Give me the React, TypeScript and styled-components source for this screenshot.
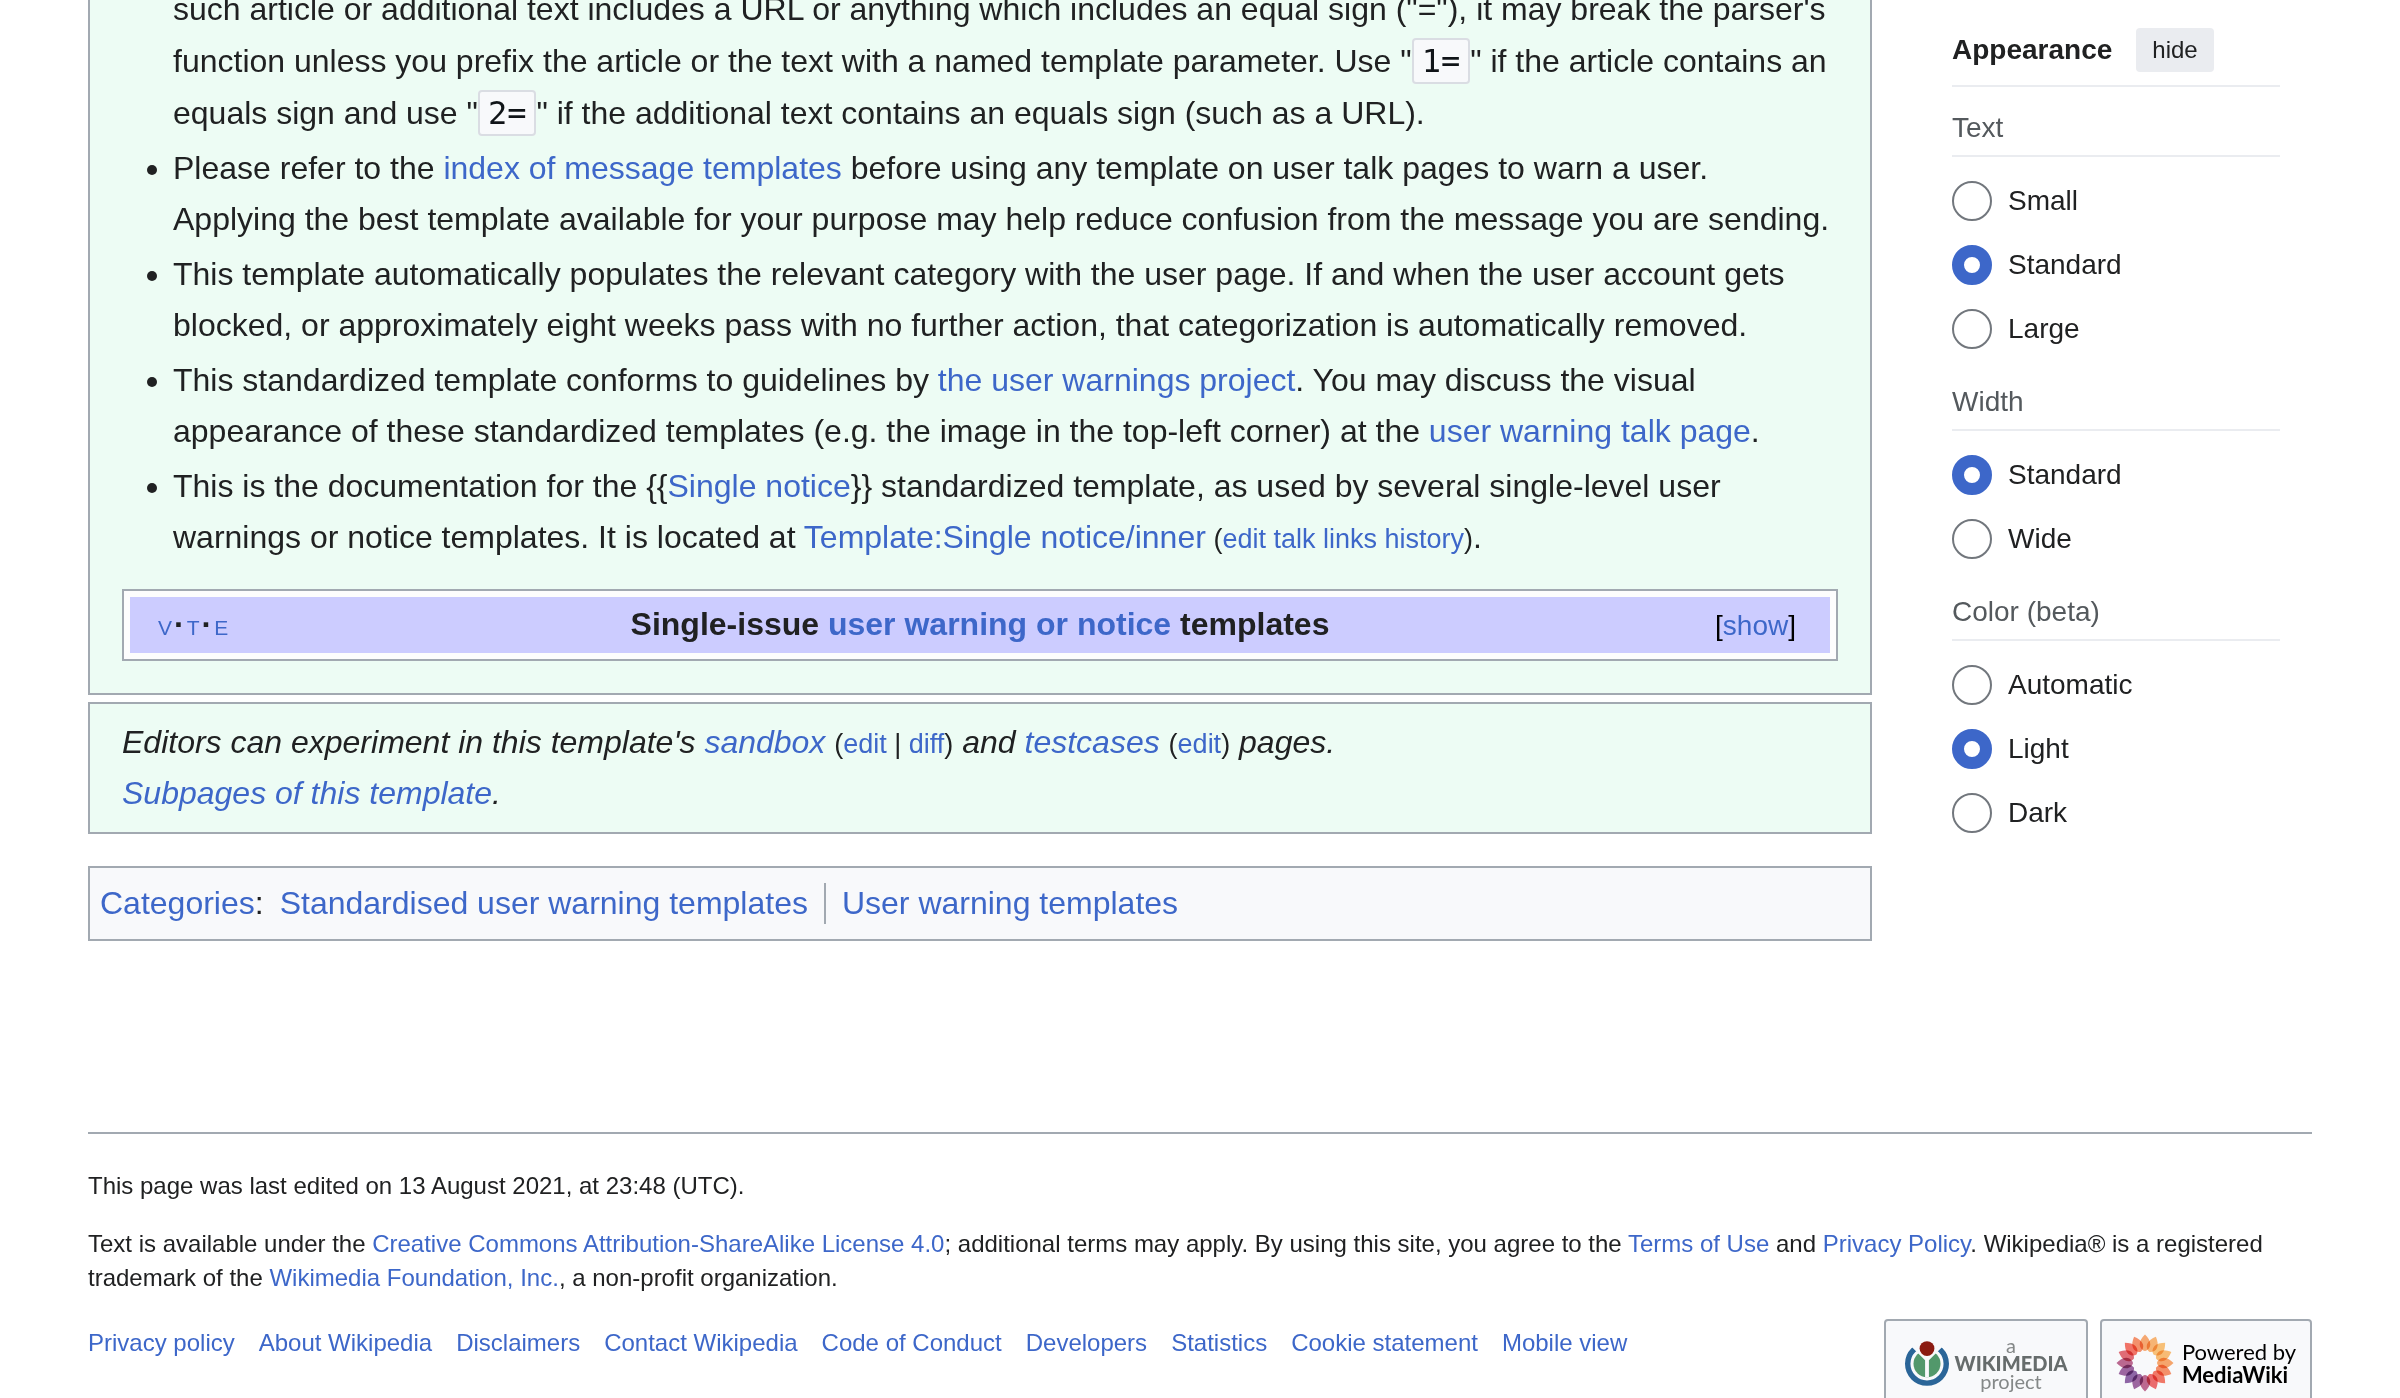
import React from "react";
import styled, { createGlobalStyle, css } from "styled-components";

const colors = {
  text: "#202122",
  subtle: "#54595d",
  link: "#3d67c9",
  border: "#a2a9b1",
  rule: "#eaecf0",
  panel: "#f8f9fb",
  mint: "#edfcf4",
};

const GlobalStyle = createGlobalStyle`
  *, *::before, *::after { box-sizing: border-box; }
  html { background: #fff; scrollbar-width: none; }
  body {
    margin: 0;
    color: ${colors.text};
    font-family: "Liberation Sans", Arial, sans-serif;
    font-size: 32px;
    line-height: 51px;
  }
`;

const Page = styled.div`
  height: 100vh;
  padding: 0 88px;
  overflow: hidden;
`;

const Columns = styled.div`
  display: grid;
  grid-template-columns: minmax(0, 1fr) 360px;
  column-gap: 80px;
`;

const Link = styled.a`
  color: ${colors.link};
  text-decoration: none;
  &:hover { text-decoration: underline; }
`;

const Article = styled.main`
  margin-top: -16px;
`;

const boxed = css`
  border: 2px solid ${colors.border};
`;

const DocBox = styled.section`
  ${boxed}
  border-top: 0;
  background: ${colors.mint};
  padding: 0 32px 32px;
`;

const Notes = styled.ul`
  margin: 0 8px 26px 51px;
  padding: 0;
`;

const Note = styled.li<{ $continued?: boolean }>`
  margin-bottom: 4px;
  list-style: ${(p) => (p.$continued ? "none" : "disc")};
`;

const Code = styled.code`
  border: 2px solid #dadde3;
  border-radius: 4px;
  background: ${colors.panel};
  color: #101418;
  padding: 2px 8px;
  font-family: "DejaVu Sans Mono", monospace;
  font-size: 32px;
  line-height: 52px;
`;

const Small = styled.span`
  font-size: 27px;
  font-style: normal;
  line-height: 40px;
`;

const Navbox = styled.nav`
  ${boxed}
  background: #fdfdfd;
  padding: 6px;
`;

const NavboxTitle = styled.div`
  display: grid;
  grid-template-columns: 192px 1fr 192px;
  align-items: baseline;
  background: #ccccff;
  padding: 2px 28px 3px;
`;

const ViewLinks = styled.span`
  font-size: 21px;
  line-height: 40px;
  white-space: nowrap;
`;

const Dot = styled.b`
  padding: 0 2px;
  font-size: 32px;
`;

const TitleText = styled.strong`
  text-align: center;
`;

const ToggleWrap = styled.span`
  padding-right: 6px;
  color: #000;
  font-size: 28px;
  line-height: 40px;
  text-align: right;
`;

const Toggle = styled.button`
  border: 0;
  background: none;
  padding: 0;
  color: ${colors.link};
  font: inherit;
  cursor: pointer;
`;

const SubpagesBox = styled.section`
  ${boxed}
  margin-top: 7px;
  background: ${colors.mint};
  padding: 13px 32px;
  font-style: italic;
`;

const Categories = styled.nav`
  ${boxed}
  display: flex;
  align-items: center;
  margin-top: 32px;
  background: ${colors.panel};
  padding: 10px;
`;

const CategoryList = styled.ul`
  display: flex;
  align-items: center;
  margin: 0;
  padding: 0;
  list-style: none;
`;

const Category = styled.li`
  padding: 0 16px;
  line-height: 41px;
  & + & { border-left: 2px solid ${colors.border}; }
`;

const Sidebar = styled.aside`
  padding: 28px 32px 0 0;
  font-size: 28px;
  line-height: 38px;
`;

const SidebarHeader = styled.div`
  display: flex;
  align-items: center;
  gap: 24px;
  border-bottom: 2px solid ${colors.rule};
  padding-bottom: 13px;
`;

const SidebarTitle = styled.strong`
  color: ${colors.text};
`;

const HideButton = styled.button`
  height: 44px;
  border: 0;
  border-radius: 4px;
  background: ${colors.rule};
  padding: 0 16px;
  color: ${colors.text};
  font-family: inherit;
  font-size: 24px;
  cursor: pointer;
`;

const OptionGroup = styled.fieldset`
  min-width: 0;
  margin: 0;
  border: 0;
  padding: 22px 0 12px;
`;

const GroupName = styled.legend`
  float: left;
  width: 100%;
  margin-bottom: 24px;
  border-bottom: 2px solid ${colors.rule};
  padding: 0 0 8px;
  color: ${colors.subtle};
`;

const Options = styled.div`
  clear: both;
  display: grid;
  gap: 24px;
`;

const Option = styled.label`
  display: flex;
  align-items: center;
  gap: 16px;
  height: 40px;
  cursor: pointer;
`;

const Radio = styled.input`
  appearance: none;
  width: 40px;
  height: 40px;
  margin: 0;
  border: 2px solid #72777d;
  border-radius: 50%;
  background: #fff;
  cursor: pointer;
  &:checked { border: 12px solid ${colors.link}; }
`;

const Footer = styled.footer`
  margin-top: 191px;
  border-top: 2px solid ${colors.border};
  padding: 35px 0 24px;
  font-size: 24px;
  line-height: 34px;
`;

const FooterText = styled.p`
  margin: 0 0 24px;
`;

const FooterRow = styled.div`
  display: flex;
  align-items: flex-start;
  justify-content: space-between;
`;

const FooterLinks = styled.ul`
  display: flex;
  flex-wrap: wrap;
  column-gap: 24px;
  margin: 0;
  padding: 7px 0 0;
  list-style: none;
`;

const Badges = styled.div`
  display: flex;
  gap: 12px;
`;

const Badge = styled.a<{ $width: number; $gap: number }>`
  ${boxed}
  display: flex;
  align-items: center;
  justify-content: center;
  gap: ${(p) => p.$gap}px;
  width: ${(p) => p.$width}px;
  height: 88px;
  border-radius: 4px;
  background: ${colors.panel};
  color: #000;
  font-family: Lato, sans-serif;
  text-decoration: none;
`;

const WikimediaText = styled.span`
  display: grid;
  justify-items: center;
  color: #848888;
  font-size: 20px;
  line-height: 18px;
`;

const WikimediaName = styled.b`
  color: #666c6c;
  font-size: 20px;
  font-weight: 900;
`;

const PoweredText = styled.span`
  display: grid;
  font-size: 22px;
  line-height: 23px;
`;

const PoweredName = styled.b`
  font-weight: 700;
`;

const WikimediaLogo = () => (
  <svg width="44" height="45" viewBox="-548 -564 1096 1112" aria-hidden="true">
    <clipPath id="wm-cut">
      <path d="M47.5-87.5v425h-95v-425l-552-552v1250h1199v-1250z" />
    </clipPath>
    <g clipPath="url(#wm-cut)">
      <circle r="336.5" fill="#52986b" />
      <circle r="480.25" fill="none" stroke="#2a6598" strokeWidth="135.5" />
    </g>
    <circle cy="-379.5" r="184.5" fill="#8b1b11" />
  </svg>
);

const petals = [
  "#f5a872", "#f6b474", "#f7c078", "#f7bb74", "#f5a56c", "#f3906a", "#f07868", "#ea6c6e",
  "#bc6890", "#9c66a0", "#8e66a6", "#9c66a0", "#ba6890", "#e06c76", "#f07468", "#f3906c",
];

const Petals = styled.g`
  isolation: isolate;
  path { mix-blend-mode: multiply; }
`;

const Sunflower = () => (
  <svg width="58" height="58" viewBox="-29 -29 58 58" aria-hidden="true">
    <Petals>
      {petals.map((fill, i) => (
        <path
          key={i}
          d="M0-28.500C3-25.500 5.500-22 5.300-18.500C5.200-15.500 2.800-12.500 0-12C-2.800-12.500-5.200-15.500-5.300-18.500C-5.500-22-3-25.500 0-28.500Z"
          fill={fill}
          transform={`rotate(${i * 22.5})`}
        />
      ))}
    </Petals>
  </svg>
);

const groups = [
  { name: "Text", options: ["Small", "Standard", "Large"], selected: "Standard" },
  { name: "Width", options: ["Standard", "Wide"], selected: "Standard" },
  { name: "Color (beta)", options: ["Automatic", "Light", "Dark"], selected: "Light" },
];

const footerLinks = [
  "Privacy policy", "About Wikipedia", "Disclaimers", "Contact Wikipedia", "Code of Conduct",
  "Developers", "Statistics", "Cookie statement", "Mobile view",
];

export default function App() {
  return (
    <Page>
      <GlobalStyle />
      <Columns>
        <Article>
          <DocBox>
            <Notes>
              <Note $continued>
                such article or additional text includes a URL or anything which includes an equal sign ("="), it may
                break the parser's function unless you prefix the article or the text with a named template parameter.
                Use "<Code>1=</Code>" if the article contains an equals sign and use "<Code>2=</Code>" if the
                additional text contains an equals sign (such as a URL).
              </Note>
              <Note>
                Please refer to the <Link href="#">index of message templates</Link> before using any template on user
                talk pages to warn a user. Applying the best template available for your purpose may help reduce
                confusion from the message you are sending.
              </Note>
              <Note>
                This template automatically populates the relevant category with the user page. If and when the user
                account gets blocked, or approximately eight weeks pass with no further action, that categorization is
                automatically removed.
              </Note>
              <Note>
                This standardized template conforms to guidelines by <Link href="#">the user warnings project</Link>.
                You may discuss the visual appearance of these standardized templates (e.g. the image in the top-left
                corner) at the <Link href="#">user warning talk page</Link>.
              </Note>
              <Note>
                This is the documentation for the {"{{"}<Link href="#">Single notice</Link>{"}}"} standardized
                template, as used by several single-level user warnings or notice templates. It is located at{" "}
                <Link href="#">Template:Single notice/inner</Link>
                <Small>
                  {" "}(<Link href="#">edit</Link> <Link href="#">talk</Link> <Link href="#">links</Link>{" "}
                  <Link href="#">history</Link>)
                </Small>.
              </Note>
            </Notes>
            <Navbox>
              <NavboxTitle>
                <ViewLinks>
                  <Link href="#">V</Link><Dot>·</Dot><Link href="#">T</Link><Dot>·</Dot><Link href="#">E</Link>
                </ViewLinks>
                <TitleText>
                  Single-issue <Link href="#">user warning or notice</Link> templates
                </TitleText>
                <ToggleWrap>
                  [<Toggle type="button">show</Toggle>]
                </ToggleWrap>
              </NavboxTitle>
            </Navbox>
          </DocBox>
          <SubpagesBox>
            Editors can experiment in this template's <Link href="#">sandbox</Link>{" "}
            <Small>(<Link href="#">edit</Link> | <Link href="#">diff</Link>)</Small> and{" "}
            <Link href="#">testcases</Link> <Small>(<Link href="#">edit</Link>)</Small> pages.
            <br />
            <Link href="#">Subpages of this template</Link>.
          </SubpagesBox>
          <Categories>
            <span><Link href="#">Categories</Link>:</span>
            <CategoryList>
              <Category><Link href="#">Standardised user warning templates</Link></Category>
              <Category><Link href="#">User warning templates</Link></Category>
            </CategoryList>
          </Categories>
        </Article>
        <Sidebar>
          <SidebarHeader>
            <SidebarTitle>Appearance</SidebarTitle>
            <HideButton type="button">hide</HideButton>
          </SidebarHeader>
          {groups.map((group) => (
            <OptionGroup key={group.name}>
              <GroupName>{group.name}</GroupName>
              <Options>
                {group.options.map((option) => (
                  <Option key={option}>
                    <Radio type="radio" name={group.name} defaultChecked={option === group.selected} />
                    {option}
                  </Option>
                ))}
              </Options>
            </OptionGroup>
          ))}
        </Sidebar>
      </Columns>
      <Footer>
        <FooterText>This page was last edited on 13 August 2021, at 23:48 (UTC).</FooterText>
        <FooterText>
          Text is available under the <Link href="#">Creative Commons Attribution-ShareAlike License 4.0</Link>;
          additional terms may apply. By using this site, you agree to the <Link href="#">Terms of Use</Link> and{" "}
          <Link href="#">Privacy Policy</Link>. Wikipedia® is a registered trademark of the{" "}
          <Link href="#">Wikimedia Foundation, Inc.</Link>, a non-profit organization.
        </FooterText>
        <FooterRow>
          <FooterLinks>
            {footerLinks.map((label) => (
              <li key={label}><Link href="#">{label}</Link></li>
            ))}
          </FooterLinks>
          <Badges>
            <Badge href="#" $width={204} $gap={6}>
              <WikimediaLogo />
              <WikimediaText>
                <span>a</span>
                <WikimediaName>WIKIMEDIA</WikimediaName>
                <span>project</span>
              </WikimediaText>
            </Badge>
            <Badge href="#" $width={212} $gap={8}>
              <Sunflower />
              <PoweredText>
                <span>Powered by</span>
                <PoweredName>MediaWiki</PoweredName>
              </PoweredText>
            </Badge>
          </Badges>
        </FooterRow>
      </Footer>
    </Page>
  );
}
